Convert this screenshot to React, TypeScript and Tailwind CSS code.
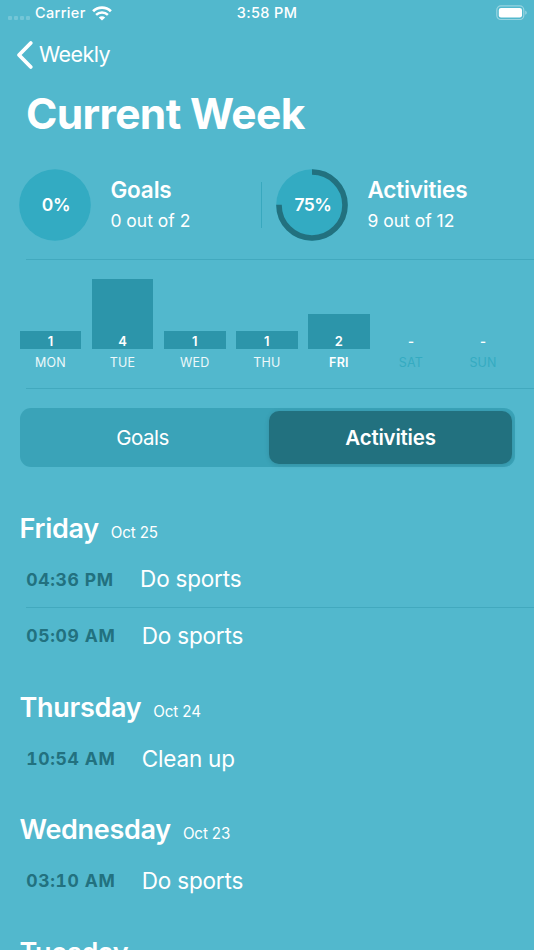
import clsx from "clsx";

type Day = {
  label: string;
  count: number;
  barClass: string;
  today?: boolean;
};

const days: Day[] = [
  { label: "MON", count: 1, barClass: "h-[18px]" },
  { label: "TUE", count: 4, barClass: "h-[70px]" },
  { label: "WED", count: 1, barClass: "h-[18px]" },
  { label: "THU", count: 1, barClass: "h-[18px]" },
  { label: "FRI", count: 2, barClass: "h-[35px]", today: true },
  { label: "SAT", count: 0, barClass: "h-[18px]" },
  { label: "SUN", count: 0, barClass: "h-[18px]" },
];

type Section = {
  day: string;
  date: string;
  entries: { time: string; title: string }[];
};

const sections: Section[] = [
  {
    day: "Friday",
    date: "Oct 25",
    entries: [
      { time: "04:36 PM", title: "Do sports" },
      { time: "05:09 AM", title: "Do sports" },
    ],
  },
  { day: "Thursday", date: "Oct 24", entries: [{ time: "10:54 AM", title: "Clean up" }] },
  { day: "Wednesday", date: "Oct 23", entries: [{ time: "03:10 AM", title: "Do sports" }] },
  { day: "Tuesday", date: "", entries: [] },
];

function StatusBar() {
  return (
    <div className="grid h-[26px] shrink-0 grid-cols-3 items-center text-[14.5px] font-medium tracking-[0.35px]">
      <div className="flex items-center pl-2">
        <div className="mt-[9px] flex gap-[2px]">
          {[0, 1, 2, 3].map((dot) => (
            <span key={dot} className="size-1 rounded-[1px] bg-white/20" />
          ))}
        </div>
        <span className="ml-[5px]">Carrier</span>
        <svg className="ml-[6px]" width="20" height="15" viewBox="0 0 20 15" fill="none" stroke="white">
          <path d="M1.1 5.3a12.8 12.8 0 0 1 17.8 0" strokeWidth="2.7" />
          <path d="M4.1 8.8a8.4 8.4 0 0 1 11.8 0" strokeWidth="2.5" />
          <path d="M10 14.6 6.8 11.5a4.6 4.6 0 0 1 6.4 0Z" fill="white" stroke="none" />
        </svg>
      </div>
      <span className="text-center">3:58 PM</span>
      <svg className="mr-[6px] justify-self-end" width="32" height="16" viewBox="0 0 32 16" fill="none">
        <rect x="0.8" y="0.9" width="27" height="13.6" rx="4" stroke="white" strokeOpacity="0.4" strokeWidth="1.2" />
        <rect x="2.8" y="2.9" width="23.2" height="9.6" rx="2.2" fill="white" />
        <path d="M29.4 5.4c1.6.7 1.6 3.7 0 4.4Z" fill="white" fillOpacity="0.5" />
      </svg>
    </div>
  );
}

type StatProps = {
  label: string;
  percent: number;
  done: number;
  total: number;
};

function Stat({ label, percent, done, total }: StatProps) {
  const circumference = 2 * Math.PI * 33;

  return (
    <div className="flex items-center">
      <div className="grid size-[72px] place-items-center">
        <svg className="col-start-1 row-start-1" width="72" height="72" viewBox="0 0 72 72">
          <circle cx="36" cy="36" r="35.8" fill="#33abc2" />
          {percent > 0 && (
            <circle
              cx="36"
              cy="36"
              r="33"
              fill="none"
              stroke="#22717f"
              strokeWidth="5.6"
              strokeDasharray={`${(circumference * percent) / 100} ${circumference}`}
              transform="rotate(-90 36 36)"
            />
          )}
        </svg>
        <span className="col-start-1 row-start-1 ml-px text-[17.5px] font-semibold tracking-[-0.5px]">{percent}%</span>
      </div>
      <div className="ml-[19px]">
        <div className="h-[30px] text-[22.5px] leading-[30px] font-semibold tracking-[-0.15px]">{label}</div>
        <div className="h-[30px] text-[17.5px] leading-[31px]">
          {done} out of {total}
        </div>
      </div>
    </div>
  );
}

function WeekChart() {
  return (
    <div className="flex h-[89px] shrink-0 items-end gap-[10.3px] pl-[19.6px]">
      {days.map((day) => (
        <div key={day.label} className="w-[61.8px] text-center">
          <div
            className={clsx(
              "flex items-end justify-center text-[13px] leading-[15.5px] font-semibold",
              day.barClass,
              day.count > 0 && "bg-[#2c95aa]",
            )}
          >
            {day.count || "-"}
          </div>
        </div>
      ))}
    </div>
  );
}

function DayLabels() {
  return (
    <div className="flex h-[39px] shrink-0 gap-[10.3px] pl-[19.6px] pt-[3px] text-center text-[12.5px] leading-[21px]">
      {days.map((day) => (
        <span
          key={day.label}
          className={clsx(
            "w-[61.8px] tracking-[0.2px]",
            day.today ? "font-semibold" : day.count ? "text-white/90" : "text-[#35abc1]",
          )}
        >
          {day.label}
        </span>
      ))}
    </div>
  );
}

function SectionList() {
  return (
    <div>
      {sections.map((section) => (
        <section key={section.day} className="pb-[14.8px]">
          <h2 className="flex h-[51.8px] items-baseline pl-[19.5px] pt-[9px]">
            <span className="text-[27px] leading-[40px] font-semibold tracking-[-0.3px]">{section.day}</span>
            {section.date && <span className="ml-[12px] text-[15.2px] tracking-[-0.15px]">{section.date}</span>}
          </h2>
          <div className="ml-[26.3px] divide-y divide-[#42a9be]">
            {section.entries.map((entry) => (
              <div key={entry.time} className="flex h-[56px] items-center">
                <span className="pt-px text-[17.5px] font-bold tracking-[0.65px] text-[#22717f] tabular-nums">{entry.time}</span>
                <span className="ml-[26.3px] text-[22.5px] tracking-[-0.2px]">{entry.title}</span>
              </div>
            ))}
          </div>
        </section>
      ))}
    </div>
  );
}

export default function App() {
  return (
    <div className="flex h-[950px] w-[534px] flex-col overflow-hidden bg-[#52b8cd] font-['Inter',sans-serif] text-white">
      <StatusBar />
      <div className="flex h-[57px] shrink-0 items-center pl-4">
        <svg width="18" height="30" viewBox="0 0 18 30" fill="none" stroke="white" strokeWidth="3.8" strokeLinecap="round" strokeLinejoin="round">
          <path d="M14.8 3 3 15l11.8 12" />
        </svg>
        <span className="ml-[5px] text-[21.5px] tracking-[-0.55px]">Weekly</span>
      </div>
      <h1 className="h-[62px] shrink-0 pl-[26px] text-[42.5px] leading-[62px] font-bold tracking-[-0.65px]">Current Week</h1>

      <div className="flex h-[114px] shrink-0 items-center pl-[19.4px] pt-[6px]">
        <div className="w-[241.6px]">
          <Stat label="Goals" percent={0} done={0} total={2} />
        </div>
        <div className="mr-[14.4px] h-[46px] w-px bg-[#38a8be]" />
        <Stat label="Activities" percent={75} done={9} total={12} />
      </div>
      <div className="ml-[26px] h-px shrink-0 bg-[#42a9be]" />

      <WeekChart />
      <DayLabels />
      <div className="ml-[26px] h-px shrink-0 bg-[#42a9be]" />

      <div className="mx-[19.5px] mt-[19px] flex h-[59px] shrink-0 rounded-[11px] bg-[#3aa3b8] p-[3px] text-[20.5px]">
        <button className="flex-1 rounded-[10px] pr-[6px] pt-[2px] tracking-[-0.5px]">Goals</button>
        <button className="w-[243px] rounded-[10px] bg-[#22717f] pl-px pt-[2px] font-semibold tracking-[-0.2px] shadow-[0_1px_5px_rgba(0,0,0,0.12)]">
          Activities
        </button>
      </div>

      <div className="mt-[33px]">
        <SectionList />
      </div>
    </div>
  );
}
